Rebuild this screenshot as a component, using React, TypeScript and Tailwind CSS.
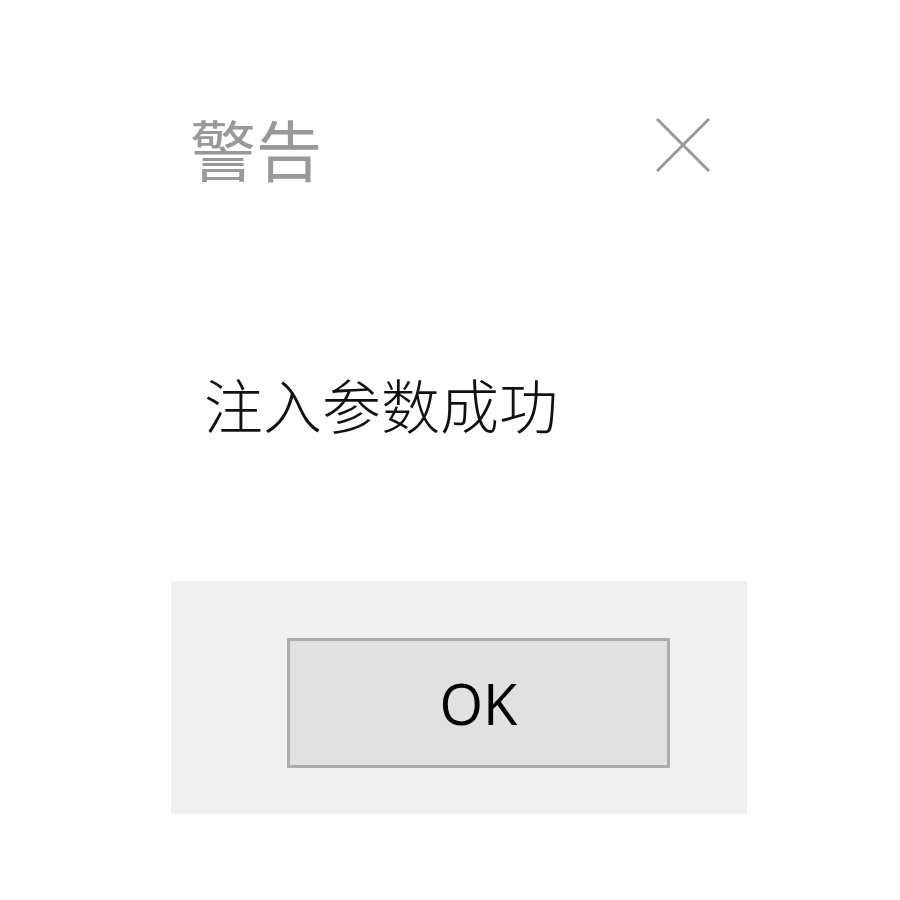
export default function App() {
  return (
    <div className="w-[900px] h-[900px] bg-white pt-[112px] font-['Noto_Sans_CJK_SC',sans-serif]">
      <div className="ml-[171px] w-[576px]">
        {/* Title bar */}
        <div className="flex items-start justify-between pl-[19px] pr-[37px]">
          <span className="text-[66px] leading-[70px] text-[#999999]">警告</span>
          <svg
            width="54"
            height="54"
            viewBox="0 0 54 54"
            className="mt-[6px]"
            stroke="#9a9a9a"
            strokeWidth="3"
          >
            <line x1="1" y1="1" x2="53" y2="53" />
            <line x1="53" y1="1" x2="1" y2="53" />
          </svg>
        </div>

        {/* Message */}
        <div className="pl-[33px] pt-[190px] h-[399px]">
          <p className="text-[59px] leading-[64px] font-light text-[#111111]">注入参数成功</p>
        </div>

        {/* Footer */}
        <div className="bg-[#f0f0f0] h-[233px] pt-[57px] pl-[116px]">
          <button className="w-[383px] h-[130px] bg-[#e1e1e1] border-[3px] border-[#adadad] flex items-center justify-center">
            <span className="text-[56px] leading-none text-black font-['Open_Sans',sans-serif]">OK</span>
          </button>
        </div>
      </div>
    </div>
  );
}
